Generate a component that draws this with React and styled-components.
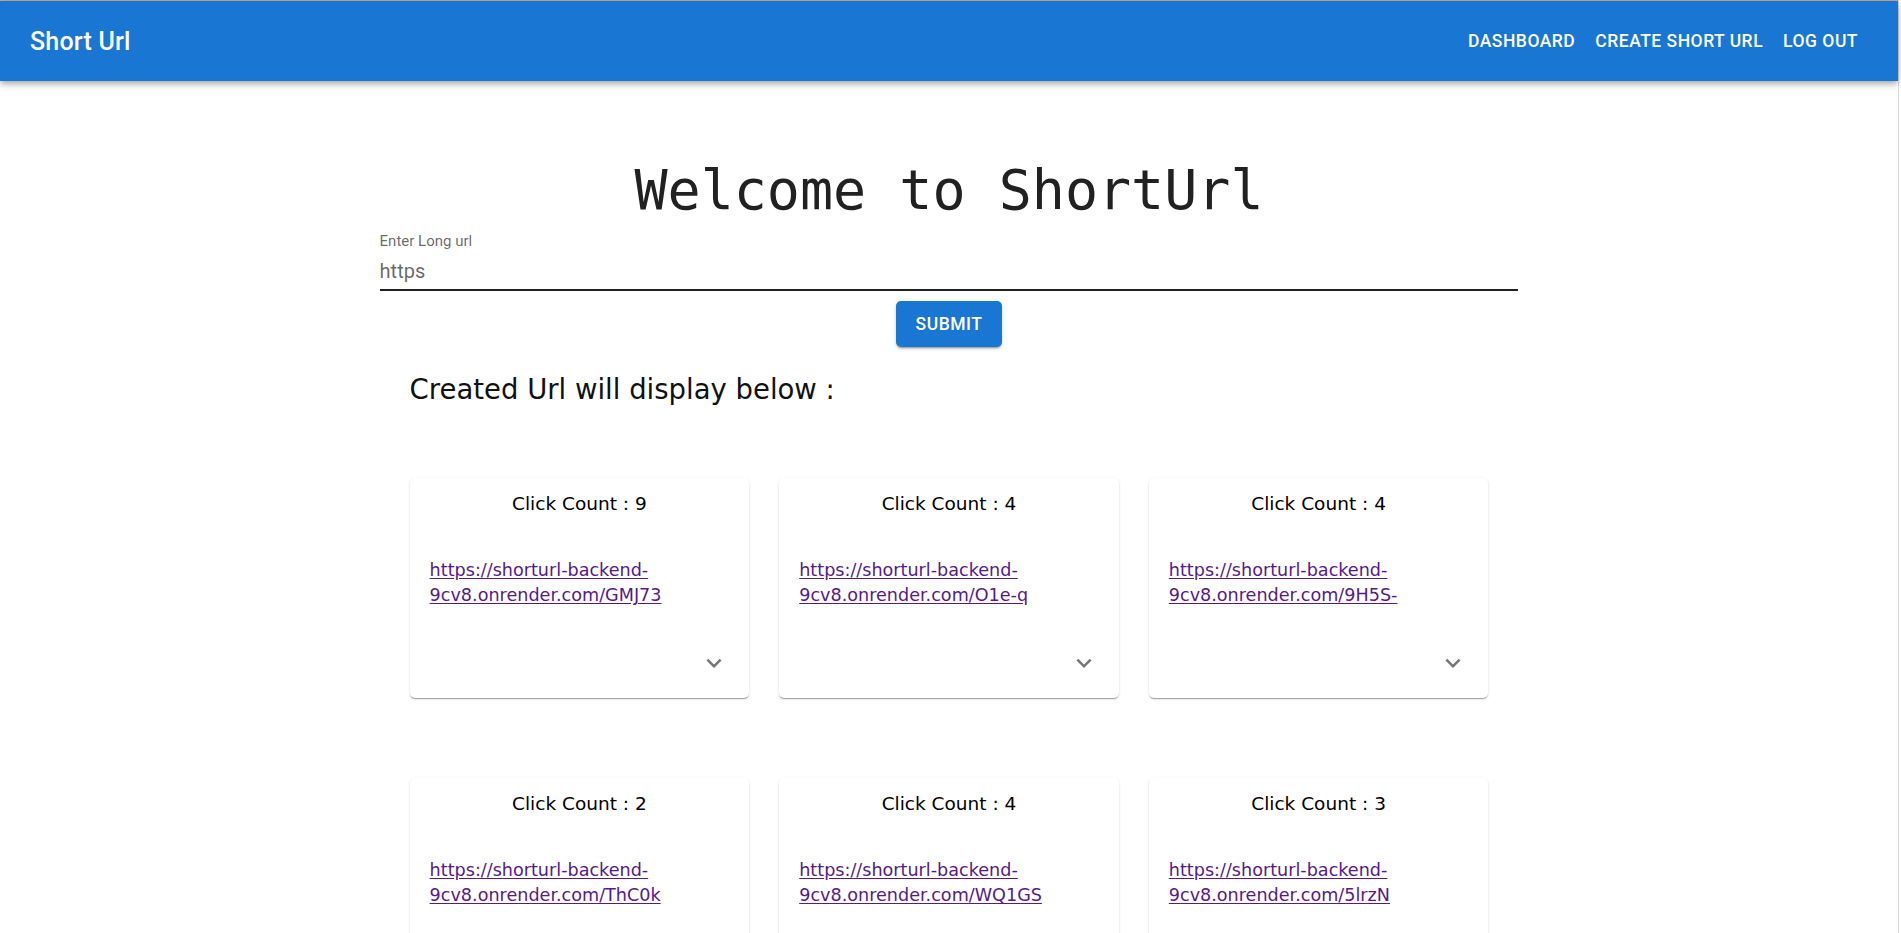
import React from 'react';
import styled, { createGlobalStyle } from 'styled-components';

const GlobalStyle = createGlobalStyle`
  html, body {
    margin: 0;
    padding: 0;
    background: #fff;
  }
  body {
    font-family: Roboto, "Liberation Sans", sans-serif;
  }
  * {
    box-sizing: border-box;
  }
`;

const comic = `"Comic Sans MS", "DejaVu Sans", sans-serif`;

const links = [
  { count: 9, id: 'GMJ73' },
  { count: 4, id: 'O1e-q' },
  { count: 4, id: '9H5S-' },
  { count: 2, id: 'ThC0k' },
  { count: 4, id: 'WQ1GS' },
  { count: 3, id: '5lrzN' },
];

const Page = styled.div`
  border-top: 1px solid #c9aa88;
  margin-right: 2px;
  border-right: 1px solid #dcdcdc;
  min-height: 100vh;
`;

const AppBar = styled.header`
  height: 80px;
  background: #1976d2;
  color: #fff;
  display: flex;
  align-items: center;
  justify-content: space-between;
  padding: 0 30px;
  box-shadow: 0 2px 5px -1px rgba(0, 0, 0, 0.2), 0 4px 6px 0 rgba(0, 0, 0, 0.14),
    0 1px 12px 0 rgba(0, 0, 0, 0.12);
  position: relative;
  z-index: 1;
`;

const Brand = styled.div`
  font-family: Roboto, sans-serif;
  font-weight: 500;
  font-size: 25px;
  letter-spacing: 0.2px;
`;

const Nav = styled.nav`
  display: flex;
  align-items: center;
`;

const NavButton = styled.button`
  background: none;
  border: 0;
  color: #fff;
  font-family: Roboto, sans-serif;
  font-weight: 500;
  font-size: 17.5px;
  letter-spacing: 0.5px;
  text-transform: uppercase;
  padding: 7.5px 10px;
  line-height: 1.75;
  cursor: pointer;
`;

const Main = styled.main`
  display: flex;
  flex-direction: column;
  align-items: center;
`;

const Heading = styled.h1`
  margin: 77px 0 0;
  font-family: "DejaVu Sans Mono", "Liberation Mono", monospace;
  font-weight: 400;
  font-size: 55px;
  line-height: 64px;
  color: #212121;
`;

const Form = styled.div`
  width: 60%;
  margin-top: 10px;
  display: flex;
  flex-direction: column;
  align-items: center;
`;

const Field = styled.label`
  width: 100%;
  display: flex;
  flex-direction: column;
`;

const FieldLabel = styled.span`
  font-family: Roboto, sans-serif;
  font-size: 15px;
  line-height: 18px;
  color: rgba(0, 0, 0, 0.6);
`;

const Input = styled.input`
  display: block;
  width: 100%;
  height: 41px;
  padding: 9px 0 6px;
  border: 0;
  border-bottom: 2px solid #212121;
  outline: none;
  font-family: Roboto, sans-serif;
  font-size: 20px;
  line-height: 24px;
  color: rgba(0, 0, 0, 0.6);
  background: transparent;
`;

const SubmitButton = styled.button`
  margin-top: 10px;
  height: 46px;
  padding: 0 20px;
  border: 0;
  border-radius: 5px;
  background: #1976d2;
  color: #fff;
  font-family: Roboto, sans-serif;
  font-weight: 500;
  font-size: 17.5px;
  letter-spacing: 0.5px;
  text-transform: uppercase;
  box-shadow: 0 3px 1px -2px rgba(0, 0, 0, 0.2), 0 2px 2px 0 rgba(0, 0, 0, 0.14),
    0 1px 5px 0 rgba(0, 0, 0, 0.12);
  cursor: pointer;
`;

const Results = styled.section`
  width: 100%;
  padding: 0 30px 40px;
`;

const ResultsTitle = styled.h5`
  margin: 26px 0 0;
  font-family: ${comic};
  font-weight: 400;
  font-size: 27.5px;
  line-height: 32px;
  color: #111;
`;

const CardGrid = styled.div`
  margin-top: 73px;
  display: grid;
  grid-template-columns: repeat(3, 1fr);
  column-gap: 30px;
  row-gap: 80px;
`;

const Card = styled.article`
  height: 220px;
  background: #fff;
  border-radius: 5px;
  box-shadow: 0 2px 1px -1px rgba(0, 0, 0, 0.2), 0 1px 1px 0 rgba(0, 0, 0, 0.14),
    0 1px 3px 0 rgba(0, 0, 0, 0.12);
  display: flex;
  flex-direction: column;
`;

const CardTitle = styled.div`
  margin-top: 14px;
  text-align: center;
  font-family: ${comic};
  font-size: 18.5px;
  line-height: 24px;
  color: #000;
`;

const ShortLink = styled.a`
  margin: 42px 20px 0;
  font-family: ${comic};
  font-size: 17.6px;
  line-height: 25px;
  color: #551a8b;
  text-decoration: underline;
  text-underline-offset: 2px;
`;

const CardActions = styled.div`
  margin-top: auto;
  padding: 0 10px 10px;
  display: flex;
  justify-content: flex-end;
`;

const IconButton = styled.button`
  width: 50px;
  height: 50px;
  border: 0;
  border-radius: 50%;
  background: none;
  display: flex;
  align-items: center;
  justify-content: center;
  color: rgba(0, 0, 0, 0.54);
  cursor: pointer;
`;

const ExpandMore = () => (
  <svg width="30" height="30" viewBox="0 0 24 24" fill="currentColor">
    <path d="M16.59 8.59 12 13.17 7.41 8.59 6 10l6 6 6-6z" />
  </svg>
);

export default function App() {
  return (
    <Page>
      <GlobalStyle />
      <AppBar>
        <Brand>Short Url</Brand>
        <Nav>
          <NavButton>Dashboard</NavButton>
          <NavButton>Create Short Url</NavButton>
          <NavButton>Log Out</NavButton>
        </Nav>
      </AppBar>
      <Main>
        <Heading>Welcome to ShortUrl</Heading>
        <Form>
          <Field>
            <FieldLabel>Enter Long url</FieldLabel>
            <Input defaultValue="https" />
          </Field>
          <SubmitButton>Submit</SubmitButton>
          <Results>
            <ResultsTitle>Created Url will display below :</ResultsTitle>
            <CardGrid>
              {links.map((l) => {
                const url = `https://shorturl-backend-9cv8.onrender.com/${l.id}`;
                return (
                  <Card key={l.id}>
                    <CardTitle>Click Count : {l.count}</CardTitle>
                    <ShortLink href={url}>{url}</ShortLink>
                    <CardActions>
                      <IconButton aria-label="show more">
                        <ExpandMore />
                      </IconButton>
                    </CardActions>
                  </Card>
                );
              })}
            </CardGrid>
          </Results>
        </Form>
      </Main>
    </Page>
  );
}
